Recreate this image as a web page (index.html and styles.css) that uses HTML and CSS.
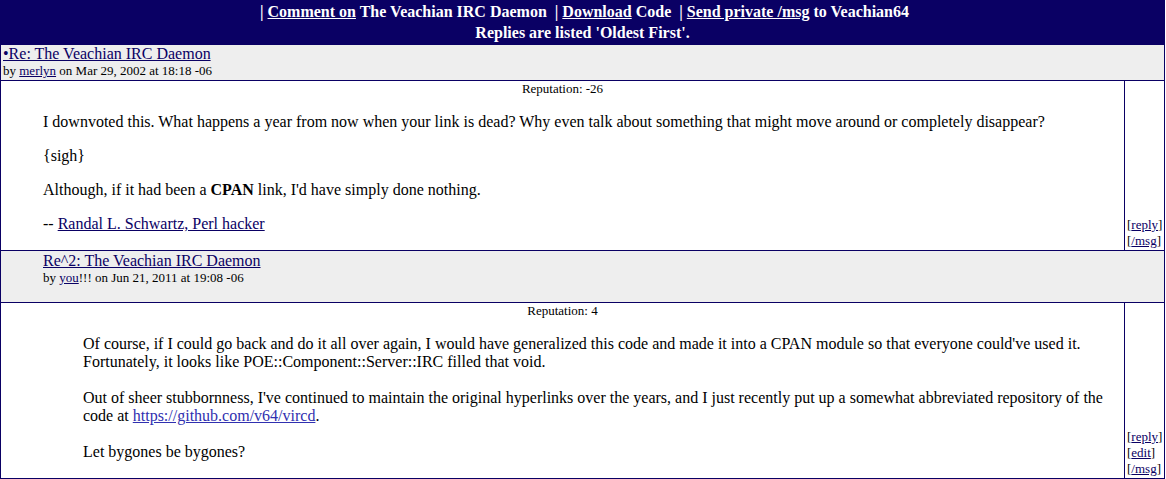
FILE: index.html
```html
<!DOCTYPE html>
<html>
<head>
<meta charset="utf-8">
<title>Re: The Veachian IRC Daemon</title>
<link rel="stylesheet" href="styles.css">
</head>
<body>
<div class="thread">
  <div class="bar">
    <div class="bar-line">&nbsp;|&nbsp;<a href="#">Comment on</a> The Veachian IRC Daemon&nbsp; |&nbsp;<a href="#">Download</a> Code&nbsp; |&nbsp;<a href="#">Send private /msg</a> to Veachian64</div>
    <div class="bar-line">Replies are listed 'Oldest First'.</div>
  </div>

  <div class="title-row">
    <div class="title"><a href="#">•Re: The Veachian IRC Daemon</a></div>
    <div class="byline">by <a href="#">merlyn</a> on Mar 29, 2002 at 18:18 -06</div>
  </div>
  <div class="body-row">
    <div class="body-main">
      <div class="rep">Reputation: -26</div>
      <div class="text">
        <p>I downvoted this. What happens a year from now when your link is dead? Why even talk about something that might move around or completely disappear?</p>
        <p>{sigh}</p>
        <p>Although, if it had been a <b>CPAN</b> link, I'd have simply done nothing.</p>
        <p>-- <a href="#">Randal L. Schwartz, Perl hacker</a></p>
      </div>
    </div>
    <div class="actions">
      <span>[<a href="#">reply</a>]</span>
      <span>[<a href="#">/msg</a>]</span>
    </div>
  </div>

  <div class="title-row title-row--nested">
    <div class="title"><a href="#">Re^2: The Veachian IRC Daemon</a></div>
    <div class="byline">by <a href="#">you</a>!!! on Jun 21, 2011 at 19:08 -06</div>
  </div>
  <div class="body-row">
    <div class="body-main">
      <div class="rep">Reputation: 4</div>
      <div class="text text--nested">
        <p>Of course, if I could go back and do it all over again, I would have generalized this code and made it into a CPAN module so that everyone could've used it. Fortunately, it looks like POE::Component::Server::IRC filled that void.<br><br>Out of sheer stubbornness, I've continued to maintain the original hyperlinks over the years, and I just recently put up a somewhat abbreviated repository of the code at <a class="ext" href="#">https://github.com/v64/vircd</a>.<br><br>Let bygones be bygones?</p>
      </div>
    </div>
    <div class="actions">
      <span>[<a href="#">reply</a>]</span>
      <span>[<a href="#">edit</a>]</span>
      <span>[<a href="#">/msg</a>]</span>
    </div>
  </div>
</div>
</body>
</html>
```

FILE: styles.css
```css
body {
  margin: 0;
  font-family: "Liberation Serif", "Times New Roman", serif;
  font-size: 16px;
  color: #000;
  background: #fff;
}

a {
  color: #0a0064;
}

.thread {
  width: 1165px;
  box-sizing: border-box;
  border: 1px solid #0a0064;
  border-top: 0;
}

.bar {
  background: #0a0064;
  color: #fff;
  font-weight: bold;
  text-align: center;
  padding: 1px 0;
}

.bar-line {
  line-height: 21px;
}

.bar a {
  color: #fff;
}

.title-row {
  background: #eee;
  border-top: 1px solid #0a0064;
  padding: 0 2px 1px;
}

.title-row--nested {
  padding: 1px 2px 16px 42px;
}

.title {
  line-height: 18px;
}

.byline {
  font-size: 13px;
  line-height: 16px;
}

.body-row {
  display: flex;
  border-top: 1px solid #0a0064;
}

.body-main {
  flex: 1;
  min-width: 0;
  padding: 0 2px 1px;
}

.rep {
  font-size: 13px;
  line-height: 16px;
  text-align: center;
}

.text {
  margin-left: 40px;
}

.text--nested {
  margin-left: 80px;
}

.text p {
  margin: 16px 0;
  line-height: 18px;
}

.ext {
  color: #3030b0;
}

.actions {
  width: 40px;
  box-sizing: border-box;
  border-left: 1px solid #0a0064;
  padding: 0 0 1px 2px;
  display: flex;
  flex-direction: column;
  justify-content: flex-end;
  font-size: 13px;
  line-height: 16px;
  white-space: nowrap;
}
```
